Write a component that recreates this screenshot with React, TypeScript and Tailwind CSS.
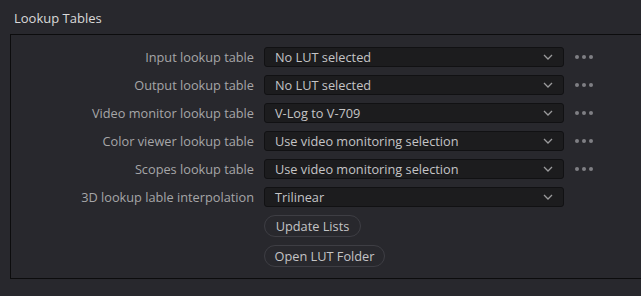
import React from "react";

const rows: { label: string; value: string; dots: boolean }[] = [
  { label: "Input lookup table", value: "No LUT selected", dots: true },
  { label: "Output lookup table", value: "No LUT selected", dots: true },
  { label: "Video monitor lookup table", value: "V-Log to V-709", dots: true },
  { label: "Color viewer lookup table", value: "Use video monitoring selection", dots: true },
  { label: "Scopes lookup table", value: "Use video monitoring selection", dots: true },
  { label: "3D lookup lable interpolation", value: "Trilinear", dots: false },
];

function Chevron() {
  return (
    <svg width="10" height="6" viewBox="0 0 10 6" className="shrink-0">
      <path d="M1 1 L5 5 L9 1" fill="none" stroke="#9a9a9c" strokeWidth="1.3" />
    </svg>
  );
}

function Dots() {
  return (
    <div className="flex items-center gap-[3.5px] ml-[11px]">
      <span className="w-[3.5px] h-[3.5px] rounded-full bg-[#7f7f84]" />
      <span className="w-[3.5px] h-[3.5px] rounded-full bg-[#7f7f84]" />
      <span className="w-[3.5px] h-[3.5px] rounded-full bg-[#7f7f84]" />
    </div>
  );
}

export default function App() {
  return (
    <div
      className="w-[641px] h-[296px] overflow-hidden bg-[#28282d]"
      style={{ fontFamily: '"Open Sans", "Noto Sans", sans-serif' }}
    >
      <div className="h-[34px] pl-[14px] pt-[8px] text-[13px] leading-[20px] text-[#dadada]">
        Lookup Tables
      </div>
      <div className="ml-[10px] w-[660px] h-[245px] border border-[#0c0c0d] pt-[12px] flex flex-col gap-[8px]">
        {rows.map((r) => (
          <div key={r.label} className="flex items-center h-[20px]">
            <div className="w-[243px] text-right text-[12.75px] text-[#a6a6a8] leading-[20px] whitespace-nowrap">
              {r.label}
            </div>
            <div className="ml-[10px] w-[300px] h-[20px] rounded-[3px] border border-[#111113] bg-[#1c1c1e] flex items-center pl-[10px] pr-[10px] justify-between">
              <span className="text-[12.75px] text-[#c4c4c6] leading-[18px] whitespace-nowrap">{r.value}</span>
              <Chevron />
            </div>
            {r.dots && <Dots />}
          </div>
        ))}
        <div className="flex flex-col gap-[8px] pl-[253px]">
          <button className="w-[97px] h-[22px] rounded-full border border-[#3e3e44] bg-[#28282d] text-[12.75px] text-[#c4c4c6] leading-[20px]">
            Update Lists
          </button>
          <button className="w-[121px] h-[22px] rounded-full border border-[#3e3e44] bg-[#28282d] text-[12.75px] text-[#c4c4c6] leading-[20px]">
            Open LUT Folder
          </button>
        </div>
      </div>
    </div>
  );
}
